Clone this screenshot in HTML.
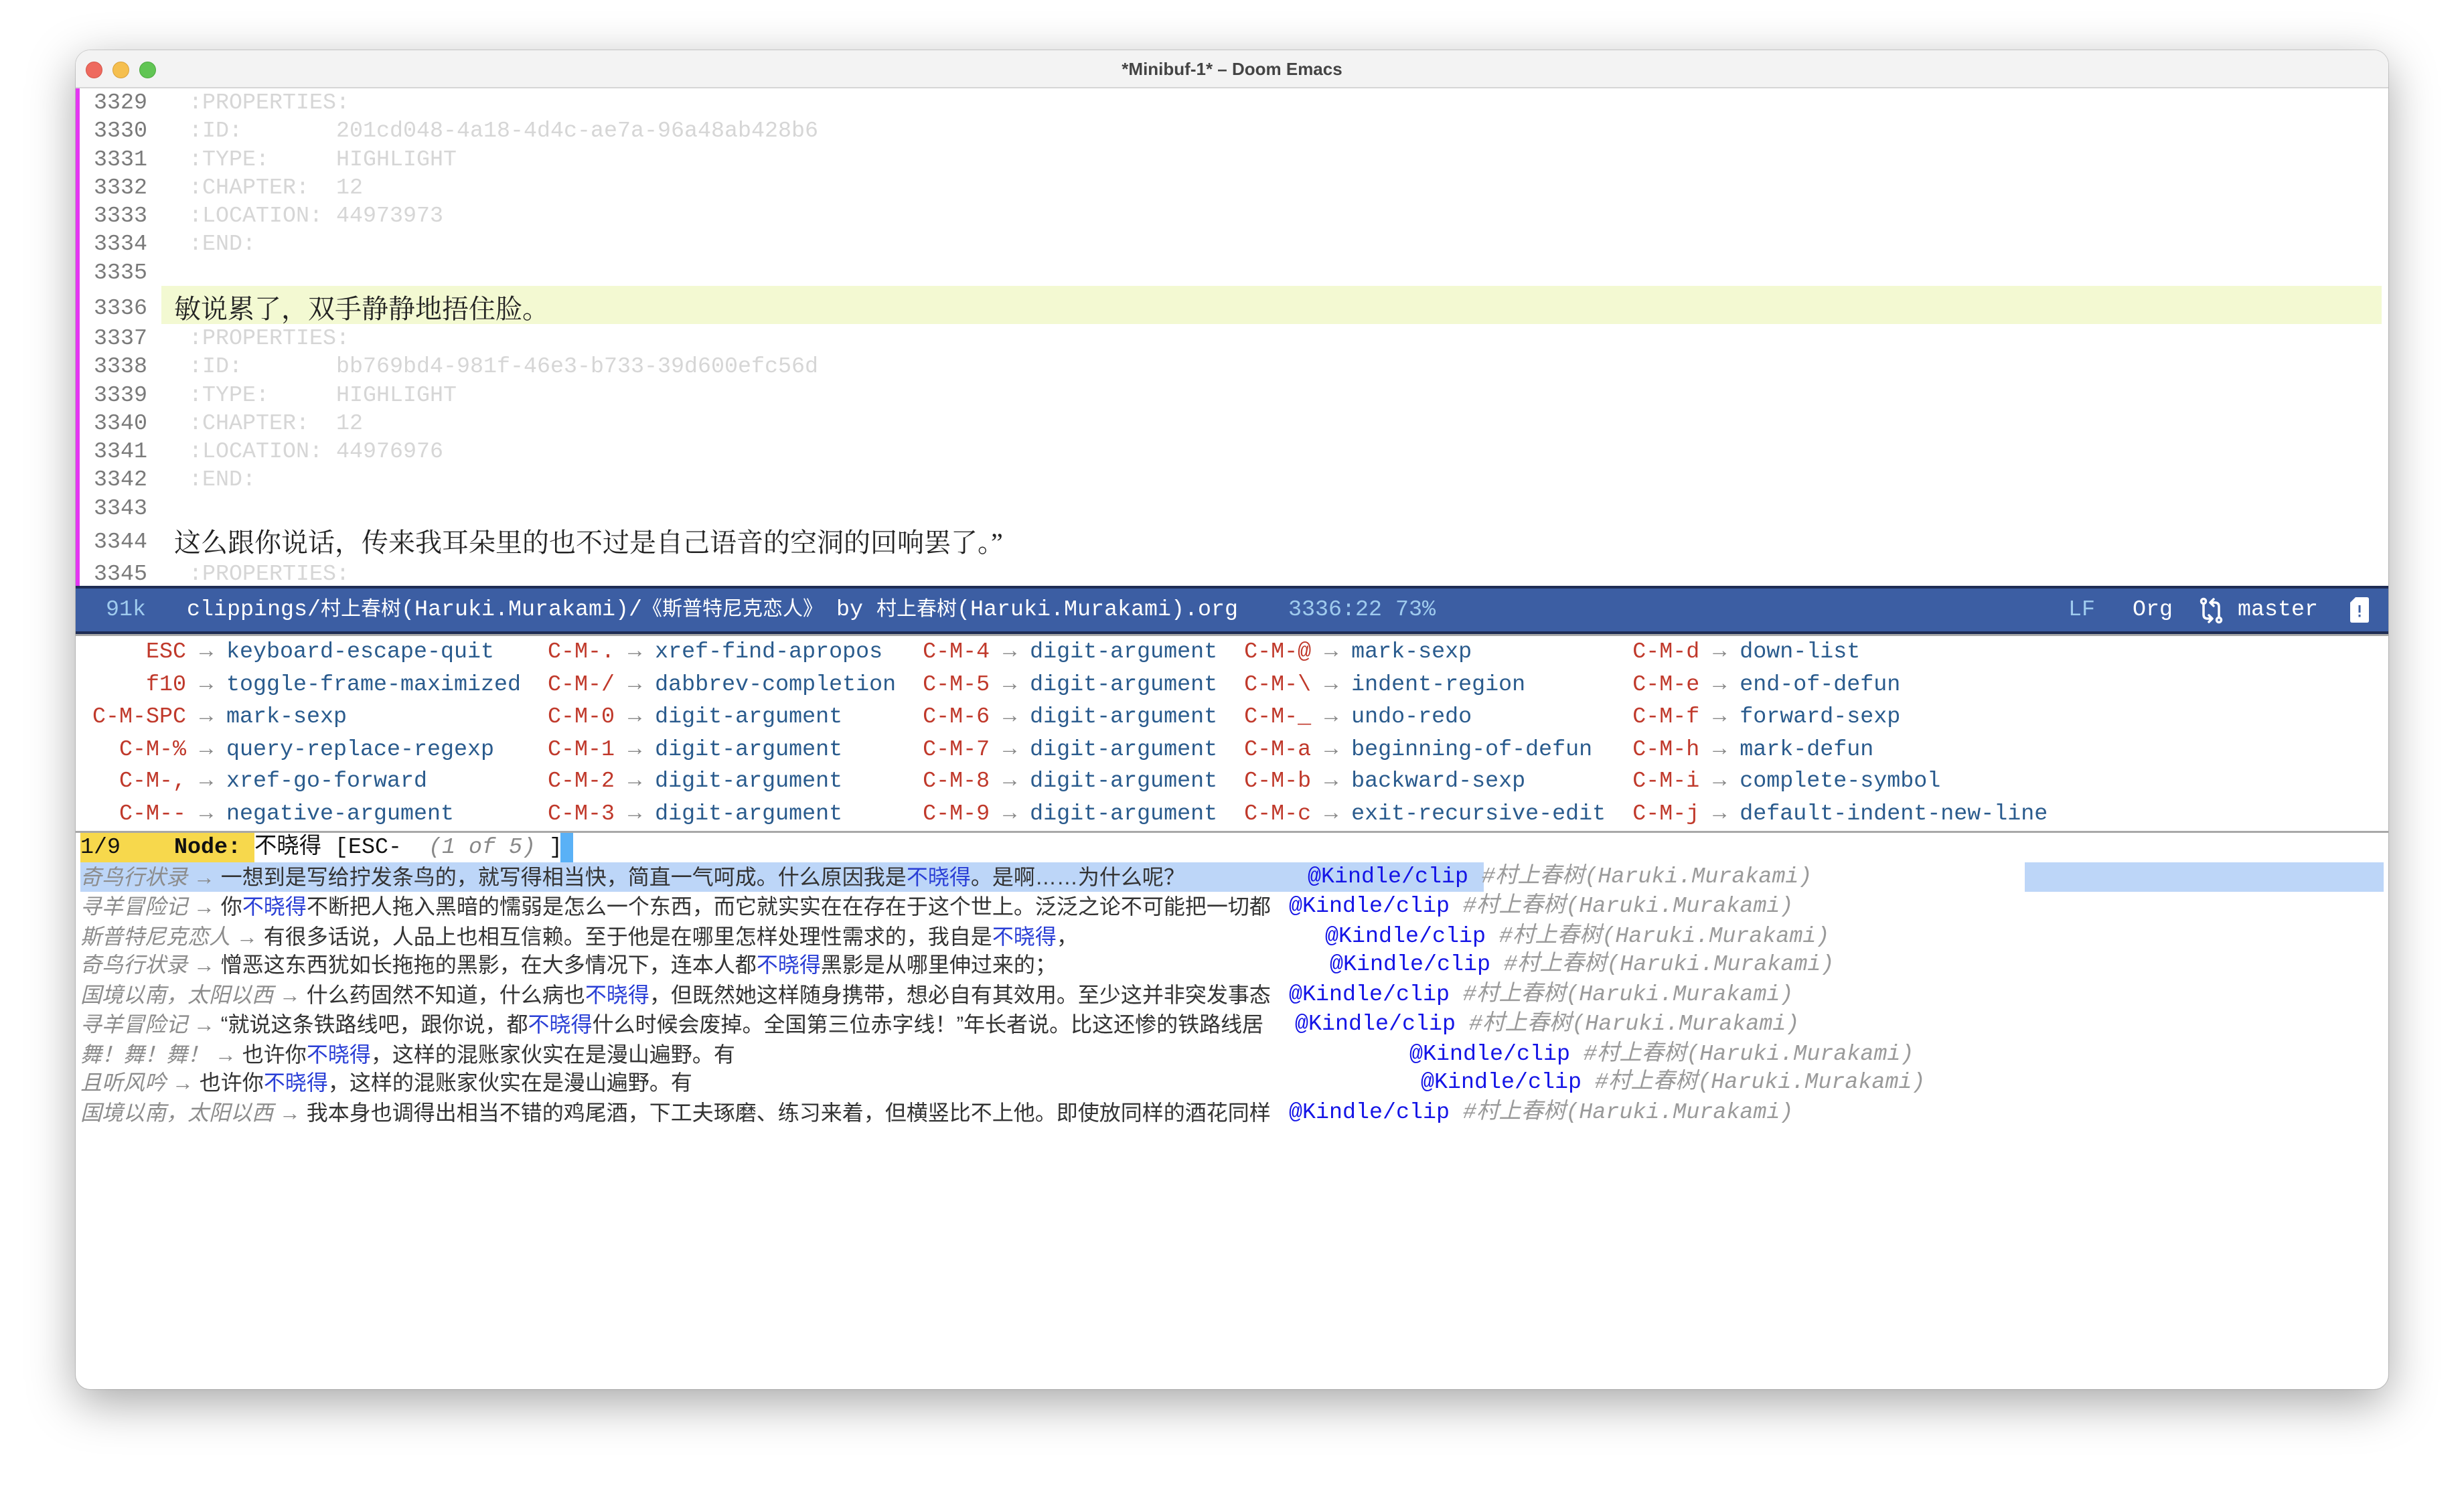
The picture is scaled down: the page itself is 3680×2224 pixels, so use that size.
<!DOCTYPE html>
<html><head><meta charset="utf-8">
<style>
*{margin:0;padding:0;box-sizing:border-box}
html,body{width:3680px;height:2224px;background:#fff;overflow:hidden}
#win{position:absolute;left:113px;top:75px;width:3454px;height:2000px;border-radius:22px;background:#fff;overflow:hidden;box-shadow:0 20px 70px rgba(0,0,0,0.35),0 0 0 1px rgba(0,0,0,0.15)}
.abs{position:absolute}
.mono{font-family:"Liberation Mono","Noto Sans CJK SC",monospace;font-size:33.33px;white-space:nowrap}
.pre{white-space:pre}
#title{left:0;top:0;width:3454px;height:57px;background:#f3f3f3;border-bottom:2px solid #d6d6d6}
#title .t{position:absolute;left:0;width:3454px;top:0;line-height:57px;text-align:center;font-family:"Liberation Sans",sans-serif;font-weight:bold;font-size:26px;color:#444}
.dot{position:absolute;top:17px;width:25px;height:25px;border-radius:50%}
#buf{left:0;top:57px;width:3454px;height:743px;overflow:hidden}
.ln{position:absolute;left:0;width:3454px;height:42px;line-height:42px;white-space:pre}
.num{position:absolute;left:27px;top:0;color:#7a7a7a}
.pr{position:absolute;left:169px;top:0;color:#d6d6d6}
.cjk{position:absolute;left:147px;top:0;font-family:"Liberation Serif","Noto Serif CJK SC",serif;font-size:40px;color:#222}
#ml{left:0;top:800px;width:3454px;height:72px;background:#3c5ea3;border-top:4px solid #1f2d55;border-bottom:4px solid #1f2d55;line-height:64px;color:#fff}
#ml > span{top:0;white-space:pre}
.lb{color:#9fcbee}
.c31{font-size:30px}
#wk{left:0;top:872px;width:3454px;height:297px;border-top:3px solid #a8a8a8;border-bottom:3px solid #a8a8a8}
.wr{position:absolute;left:25px;height:48px;line-height:48px;white-space:pre}
.k{color:#c0392b}.a{color:#888}.f{color:#2a5b8d}
.vr{position:absolute;left:7px;height:44px;line-height:44px;white-space:nowrap;overflow:hidden;font-family:"Liberation Sans","Noto Sans CJK SC",sans-serif;font-size:32px;color:#333}
.bk{font-style:italic;color:#8c8c8c}
.hl{color:#2a3fd6}
.tag{position:absolute;height:44px;line-height:44px}
.kc{color:#1414e6}.ht{color:#9a9a9a;font-style:italic}
</style></head><body>
<div id="win">
 <div id="title" class="abs">
  <div class="dot" style="left:15px;background:#ee6a5f;border:1px solid #d55448"></div>
  <div class="dot" style="left:55px;background:#f5bf4f;border:1px solid #d9a13a"></div>
  <div class="dot" style="left:95px;background:#61c554;border:1px solid #4ca93f"></div>
  <div class="t">*Minibuf-1* – Doom Emacs</div>
 </div>
 <div id="buf" class="abs mono">
  <div class="abs" style="left:0;top:0;width:6px;height:743px;background:#e436f2"></div>
  <div class="ln" style="top:1px"><span class="num">3329</span><span class="pr">:PROPERTIES:</span></div>
  <div class="ln" style="top:43px"><span class="num">3330</span><span class="pr">:ID:       201cd048-4a18-4d4c-ae7a-96a48ab428b6</span></div>
  <div class="ln" style="top:86px"><span class="num">3331</span><span class="pr">:TYPE:     HIGHLIGHT</span></div>
  <div class="ln" style="top:128px"><span class="num">3332</span><span class="pr">:CHAPTER:  12</span></div>
  <div class="ln" style="top:170px"><span class="num">3333</span><span class="pr">:LOCATION: 44973973</span></div>
  <div class="ln" style="top:212px"><span class="num">3334</span><span class="pr">:END:</span></div>
  <div class="ln" style="top:255px"><span class="num">3335</span></div>
  <div class="abs" style="left:128px;top:295px;width:3316px;height:57px;background:#f3f9d2"></div>
  <div class="ln" style="top:301px;height:57px;line-height:57px"><span class="num">3336</span><span class="cjk">敏说累了，双手静静地捂住脸。</span></div>
  <div class="ln" style="top:353px"><span class="num">3337</span><span class="pr">:PROPERTIES:</span></div>
  <div class="ln" style="top:395px"><span class="num">3338</span><span class="pr">:ID:       bb769bd4-981f-46e3-b733-39d600efc56d</span></div>
  <div class="ln" style="top:438px"><span class="num">3339</span><span class="pr">:TYPE:     HIGHLIGHT</span></div>
  <div class="ln" style="top:480px"><span class="num">3340</span><span class="pr">:CHAPTER:  12</span></div>
  <div class="ln" style="top:522px"><span class="num">3341</span><span class="pr">:LOCATION: 44976976</span></div>
  <div class="ln" style="top:564px"><span class="num">3342</span><span class="pr">:END:</span></div>
  <div class="ln" style="top:607px"><span class="num">3343</span></div>
  <div class="ln" style="top:650px;height:57px;line-height:57px"><span class="num">3344</span><span class="cjk">这么跟你说话，传来我耳朵里的也不过是自己语音的空洞的回响罢了。”</span></div>
  <div class="ln" style="top:705px"><span class="num">3345</span><span class="pr">:PROPERTIES:</span></div>
 </div>
 <div id="ml" class="abs mono"><span class="abs lb" style="left:45px">91k</span><span class="abs" style="left:166px">clippings/<span class="c31">村上春树</span>(Haruki.Murakami)/<span class="c31">《斯普特尼克恋人》</span> by <span class="c31">村上春树</span>(Haruki.Murakami).org</span><span class="abs lb" style="left:1811px">3336:22 73%</span><span class="abs lb" style="left:2976px">LF</span><span class="abs" style="left:3072px">Org</span><span class="abs" style="left:3229px">master</span><svg class="abs" style="left:3172px;top:13px" width="36" height="40" viewBox="0 0 36 40" fill="none" stroke="#fff" stroke-width="3.5" stroke-linecap="round" stroke-linejoin="round"><circle cx="6" cy="6" r="3.5"/><path d="M6 10 V26 Q6 32 12 32 H18 M14 27 L19 32 L14 37"/><circle cx="29" cy="34" r="3.5"/><path d="M29 30 V14 Q29 8 23 8 H17 M21 3 L16 8 L21 13"/></svg><svg class="abs" style="left:3396px;top:13px" width="30" height="38" viewBox="0 0 30 38"><path d="M9 0 H26 Q29 0 29 3 V35 Q29 38 26 38 H4 Q1 38 1 35 V8 Z" fill="#fff"/><rect x="13.5" y="12" width="3" height="11" fill="#3c5ea3"/><rect x="13.5" y="26" width="3" height="3.5" fill="#3c5ea3"/></svg></div>
 <div id="wk" class="abs mono">
  <div class="wr" style="top:0px"><span class="k">    ESC</span><span class="a"> → </span><span class="f">keyboard-escape-quit    </span><span class="k">C-M-.</span><span class="a"> → </span><span class="f">xref-find-apropos   </span><span class="k">C-M-4</span><span class="a"> → </span><span class="f">digit-argument  </span><span class="k">C-M-@</span><span class="a"> → </span><span class="f">mark-sexp            </span><span class="k">C-M-d</span><span class="a"> → </span><span class="f">down-list</span></div>
  <div class="wr" style="top:49px"><span class="k">    f10</span><span class="a"> → </span><span class="f">toggle-frame-maximized  </span><span class="k">C-M-/</span><span class="a"> → </span><span class="f">dabbrev-completion  </span><span class="k">C-M-5</span><span class="a"> → </span><span class="f">digit-argument  </span><span class="k">C-M-\</span><span class="a"> → </span><span class="f">indent-region        </span><span class="k">C-M-e</span><span class="a"> → </span><span class="f">end-of-defun</span></div>
  <div class="wr" style="top:97px"><span class="k">C-M-SPC</span><span class="a"> → </span><span class="f">mark-sexp               </span><span class="k">C-M-0</span><span class="a"> → </span><span class="f">digit-argument      </span><span class="k">C-M-6</span><span class="a"> → </span><span class="f">digit-argument  </span><span class="k">C-M-_</span><span class="a"> → </span><span class="f">undo-redo            </span><span class="k">C-M-f</span><span class="a"> → </span><span class="f">forward-sexp</span></div>
  <div class="wr" style="top:146px"><span class="k">  C-M-%</span><span class="a"> → </span><span class="f">query-replace-regexp    </span><span class="k">C-M-1</span><span class="a"> → </span><span class="f">digit-argument      </span><span class="k">C-M-7</span><span class="a"> → </span><span class="f">digit-argument  </span><span class="k">C-M-a</span><span class="a"> → </span><span class="f">beginning-of-defun   </span><span class="k">C-M-h</span><span class="a"> → </span><span class="f">mark-defun</span></div>
  <div class="wr" style="top:193px"><span class="k">  C-M-,</span><span class="a"> → </span><span class="f">xref-go-forward         </span><span class="k">C-M-2</span><span class="a"> → </span><span class="f">digit-argument      </span><span class="k">C-M-8</span><span class="a"> → </span><span class="f">digit-argument  </span><span class="k">C-M-b</span><span class="a"> → </span><span class="f">backward-sexp        </span><span class="k">C-M-i</span><span class="a"> → </span><span class="f">complete-symbol</span></div>
  <div class="wr" style="top:242px"><span class="k">  C-M--</span><span class="a"> → </span><span class="f">negative-argument       </span><span class="k">C-M-3</span><span class="a"> → </span><span class="f">digit-argument      </span><span class="k">C-M-9</span><span class="a"> → </span><span class="f">digit-argument  </span><span class="k">C-M-c</span><span class="a"> → </span><span class="f">exit-recursive-edit  </span><span class="k">C-M-j</span><span class="a"> → </span><span class="f">default-indent-new-line</span></div>
 </div>
 <div class="abs" style="left:7px;top:1169px;width:260px;height:44px;background:#f7d84c"></div>
 <div class="abs mono pre" style="left:7px;top:1169px;line-height:44px;color:#111">1/9    <b>Node:</b> 不晓得 [ESC-  <i style="color:#888">(1 of 5)</i> ]</div>
 <div class="abs" style="left:724px;top:1169px;width:19px;height:44px;background:#5ab1f6"></div>
 <div class="abs" style="left:7px;top:1213px;width:2096px;height:44px;background:#bdd6f8"></div>
 <div class="abs" style="left:2911px;top:1213px;width:536px;height:44px;background:#bdd6f8"></div>

 <div class="vr" style="top:1213px;width:1820px"><span class="bk">奇鸟行状录</span> <span class="a">→</span> 一想到是写给拧发条鸟的，就写得相当快，简直一气呵成。什么原因我是<span class="hl">不晓得</span>。是啊……为什么呢？</div>
 <div class="tag mono" style="top:1213px;left:1840px"><span class="kc">@Kindle/clip</span> <span class="ht">#村上春树(Haruki.Murakami)</span></div>

 <div class="vr" style="top:1257px;width:1800px"><span class="bk">寻羊冒险记</span> <span class="a">→</span> 你<span class="hl">不晓得</span>不断把人拖入黑暗的懦弱是怎么一个东西，而它就实实在在存在于这个世上。泛泛之论不可能把一切都</div>
 <div class="tag mono" style="top:1257px;left:1812px"><span class="kc">@Kindle/clip</span> <span class="ht">#村上春树(Haruki.Murakami)</span></div>

 <div class="vr" style="top:1302px;width:1850px"><span class="bk">斯普特尼克恋人</span> <span class="a">→</span> 有很多话说，人品上也相互信赖。至于他是在哪里怎样处理性需求的，我自是<span class="hl">不晓得</span>，</div>
 <div class="tag mono" style="top:1302px;left:1866px"><span class="kc">@Kindle/clip</span> <span class="ht">#村上春树(Haruki.Murakami)</span></div>

 <div class="vr" style="top:1344px;width:1860px"><span class="bk">奇鸟行状录</span> <span class="a">→</span> 憎恶这东西犹如长拖拖的黑影，在大多情况下，连本人都<span class="hl">不晓得</span>黑影是从哪里伸过来的；</div>
 <div class="tag mono" style="top:1344px;left:1873px"><span class="kc">@Kindle/clip</span> <span class="ht">#村上春树(Haruki.Murakami)</span></div>

 <div class="vr" style="top:1389px;width:1800px"><span class="bk">国境以南，太阳以西</span> <span class="a">→</span> 什么药固然不知道，什么病也<span class="hl">不晓得</span>，但既然她这样随身携带，想必自有其效用。至少这并非突发事态</div>
 <div class="tag mono" style="top:1389px;left:1812px"><span class="kc">@Kindle/clip</span> <span class="ht">#村上春树(Haruki.Murakami)</span></div>

 <div class="vr" style="top:1433px;width:1808px"><span class="bk">寻羊冒险记</span> <span class="a">→</span> “就说这条铁路线吧，跟你说，都<span class="hl">不晓得</span>什么时候会废掉。全国第三位赤字线！”年长者说。比这还惨的铁路线居</div>
 <div class="tag mono" style="top:1433px;left:1821px"><span class="kc">@Kindle/clip</span> <span class="ht">#村上春树(Haruki.Murakami)</span></div>

 <div class="vr" style="top:1478px;width:1970px"><span class="bk">舞！舞！舞！</span> <span class="a">→</span> 也许你<span class="hl">不晓得</span>，这样的混账家伙实在是漫山遍野。有</div>
 <div class="tag mono" style="top:1478px;left:1992px"><span class="kc">@Kindle/clip</span> <span class="ht">#村上春树(Haruki.Murakami)</span></div>

 <div class="vr" style="top:1520px;width:1990px"><span class="bk">且听风吟</span> <span class="a">→</span> 也许你<span class="hl">不晓得</span>，这样的混账家伙实在是漫山遍野。有</div>
 <div class="tag mono" style="top:1520px;left:2009px"><span class="kc">@Kindle/clip</span> <span class="ht">#村上春树(Haruki.Murakami)</span></div>

 <div class="vr" style="top:1565px;width:1800px"><span class="bk">国境以南，太阳以西</span> <span class="a">→</span> 我本身也调得出相当不错的鸡尾酒，下工夫琢磨、练习来着，但横竖比不上他。即使放同样的酒花同样</div>
 <div class="tag mono" style="top:1565px;left:1812px"><span class="kc">@Kindle/clip</span> <span class="ht">#村上春树(Haruki.Murakami)</span></div>
</div>
</body></html>
